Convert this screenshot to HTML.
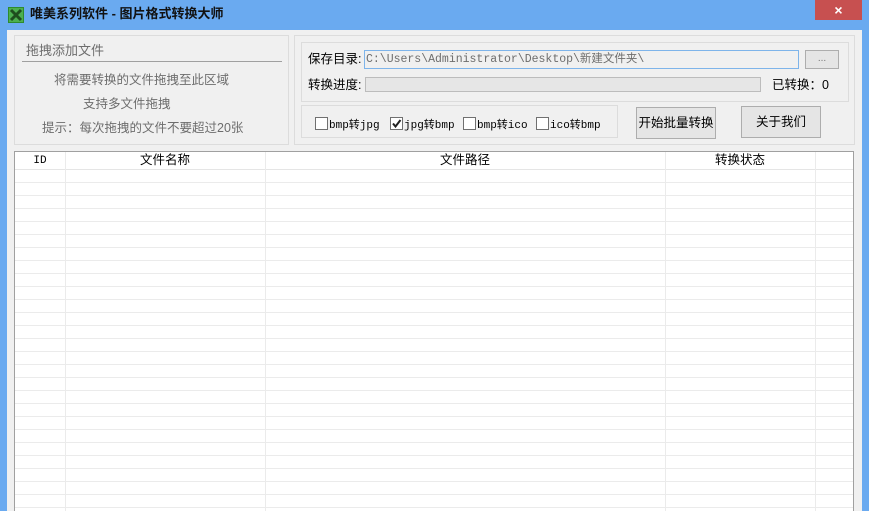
<!DOCTYPE html>
<html><head><meta charset="utf-8"><style>
*{margin:0;padding:0;box-sizing:border-box}
body{width:869px;height:511px;overflow:hidden;background:#6aaaf0;font-family:"Liberation Sans","Noto Sans CJK SC","WenQuanYi Zen Hei",sans-serif;font-size:12px;line-height:14px;position:relative}
.a{position:absolute}
.mono{font-family:"Liberation Mono","Noto Sans CJK SC",monospace}
.cb{display:inline-block;width:13px;height:13px;border:1px solid #707070;background:#fff;vertical-align:-2px;margin-right:1px;position:relative}
.btn{border:1px solid #adadad;background:#e5e5e5;text-align:center}
</style></head><body>
<div class="a" style="left:0;top:0;width:869px;height:30px;background:#6aaaf0"></div>
<svg class="a" style="left:8px;top:7px" width="16" height="16"><rect x="0" y="0" width="16" height="16" fill="#2e8b2e"/><rect x="1" y="1" width="14" height="14" fill="#4caf50"/><path d="M3 3L13 13M13 3L3 13" stroke="#1e4e1e" stroke-width="3"/></svg>
<div class="a" style="left:30px;top:7px;font-size:13px;font-weight:bold;color:#111">唯美系列软件 - 图片格式转换大师</div>
<div class="a" style="left:815px;top:0;width:47px;height:20px;background:#c75050;color:#fff;text-align:center;font-size:14px;line-height:20px;font-weight:bold">×</div>
<div class="a" style="left:7px;top:30px;width:855px;height:481px;background:#f0f0f0"></div>
<div class="a" style="left:14px;top:35px;width:275px;height:110px;border:1px solid #dcdcdc"></div>
<div class="a" style="left:26px;top:44px;color:#6d6d6d;font-size:13px">拖拽添加文件</div>
<div class="a" style="left:22px;top:61px;width:260px;height:1px;background:#a0a0a0"></div>
<div class="a" style="left:54px;top:73px;color:#6d6d6d;font-size:12.5px">将需要转换的文件拖拽至此区域</div>
<div class="a" style="left:83px;top:97px;color:#6d6d6d;font-size:12.5px">支持多文件拖拽</div>
<div class="a" style="left:42px;top:121px;color:#6d6d6d;font-size:12.5px">提示：每次拖拽的文件不要超过20张</div>
<div class="a" style="left:294px;top:35px;width:561px;height:110px;border:1px solid #dcdcdc"></div>
<div class="a" style="left:301px;top:42px;width:548px;height:60px;border:1px solid #dcdcdc"></div>
<div class="a" style="left:308px;top:52px;color:#000;font-size:12.5px">保存目录:</div>
<div class="a mono" style="left:364px;top:50px;width:435px;height:19px;border:1px solid #7eb4ea;background:#f0f0f0;color:#6d6d6d;font-size:11.5px;line-height:17px;padding-left:1px;white-space:nowrap">C:\Users\Administrator\Desktop\新建文件夹\</div>
<div class="a btn" style="left:805px;top:50px;width:34px;height:19px;color:#777;font-size:10px;line-height:15px">...</div>
<div class="a" style="left:308px;top:78px;font-size:12.5px">转换进度:</div>
<div class="a" style="left:365px;top:77px;width:396px;height:15px;border:1px solid #bcbcbc;background:#e6e6e6"></div>
<div class="a" style="left:772px;top:78px;font-size:12.5px">已转换：0</div>
<div class="a" style="left:301px;top:105px;width:317px;height:33px;border:1px solid #dcdcdc"></div>
<div class="a mono" style="left:315px;top:117px;font-size:11px;white-space:nowrap"><span class="cb"></span>bmp转jpg</div>
<div class="a mono" style="left:390px;top:117px;font-size:11px;white-space:nowrap"><span class="cb"><svg style="position:absolute;left:0;top:0" width="11" height="11"><path d="M2 5.5L4.5 8.5L9.5 2" stroke="#222" stroke-width="2" fill="none"/></svg></span>jpg转bmp</div>
<div class="a mono" style="left:463px;top:117px;font-size:11px;white-space:nowrap"><span class="cb"></span>bmp转ico</div>
<div class="a mono" style="left:536px;top:117px;font-size:11px;white-space:nowrap"><span class="cb"></span>ico转bmp</div>
<div class="a btn" style="left:636px;top:107px;width:80px;height:32px;line-height:30px;font-size:12.5px">开始批量转换</div>
<div class="a btn" style="left:741px;top:106px;width:80px;height:32px;line-height:30px;font-size:12.5px">关于我们</div>
<div class="a" style="left:14px;top:151px;width:840px;height:360px;border:1px solid #a0a0a0;border-bottom:none;background:#fff;overflow:hidden">
<div style="position:absolute;left:0;top:0;width:840px;height:18px;background:#fff;border-bottom:1px solid #e5e5e5"></div>
<div style="position:absolute;left:0;top:18px;width:840px;height:360px;background:repeating-linear-gradient(#fff 0,#fff 12px,#ebebeb 12px,#ebebeb 13px)"></div>
<div style="position:absolute;left:50px;top:0;width:1px;height:360px;background:#ebebeb"></div>
<div style="position:absolute;left:250px;top:0;width:1px;height:360px;background:#ebebeb"></div>
<div style="position:absolute;left:650px;top:0;width:1px;height:360px;background:#ebebeb"></div>
<div style="position:absolute;left:800px;top:0;width:1px;height:360px;background:#ebebeb"></div>
<div class="mono" style="position:absolute;left:0;top:2px;width:50px;text-align:center;font-size:11px">ID</div>
<div style="position:absolute;left:50px;top:1px;width:200px;text-align:center;font-size:12.5px">文件名称</div>
<div style="position:absolute;left:250px;top:1px;width:400px;text-align:center;font-size:12.5px">文件路径</div>
<div style="position:absolute;left:650px;top:1px;width:150px;text-align:center;font-size:12.5px">转换状态</div>
</div>
</body></html>
